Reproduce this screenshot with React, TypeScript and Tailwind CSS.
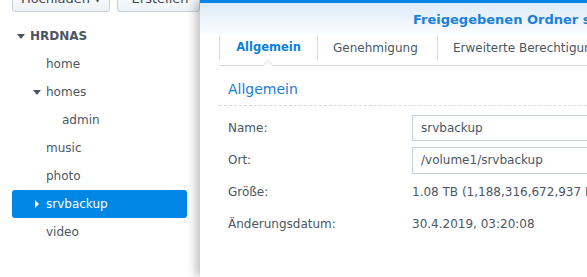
import React from "react";

const font = { fontFamily: '"DejaVu Sans", Verdana, sans-serif' };

function TriDown({ className }: { className?: string }) {
  return (
    <svg width="8" height="5" viewBox="0 0 8 5" className={className}>
      <path d="M0 0 L8 0 L4 5 Z" fill="currentColor" />
    </svg>
  );
}
function TriRight({ className }: { className?: string }) {
  return (
    <svg width="4" height="8" viewBox="0 0 4 8" className={className}>
      <path d="M0 0 L4 4 L0 8 Z" fill="currentColor" />
    </svg>
  );
}

function TreeRow({
  label,
  pl,
  box = 0,
  icon,
  selected,
  bold,
}: {
  label: string;
  pl: number;
  box?: number;
  icon?: "down" | "right";
  selected?: boolean;
  bold?: boolean;
}) {
  return (
    <div
      className={`h-[28px] flex items-center rounded-[3px] ${
        selected ? "bg-[#0086e5] text-white" : "text-[#4b5663]"
      } ${bold ? "font-bold" : ""}`}
      style={{ paddingLeft: pl }}
    >
      {box > 0 && (
        <div className="flex items-center shrink-0" style={{ width: box }}>
          {icon === "down" && <TriDown className="text-[#4b5663]" />}
          {icon === "right" && <TriRight className="text-white" />}
        </div>
      )}
      <span>{label}</span>
    </div>
  );
}

export default function App() {
  return (
    <div
      className="relative w-[587px] h-[277px] overflow-hidden bg-white text-[12px] text-[#4b5663]"
      style={font}
    >
      {/* Left panel */}
      <div className="w-[200px] h-full bg-white flex flex-col">
        <div className="flex gap-[7px] pl-[12px] mt-[-14px]">
          <div className="w-[107px] h-[26px] border border-[#c6ced8] rounded-[3px] bg-gradient-to-b from-[#ffffff] to-[#eef2f6] flex items-center justify-center text-[#3c4650] text-[13px]">
            Hochladen ▾
          </div>
          <div className="w-[90px] h-[26px] border border-[#c6ced8] rounded-[3px] bg-gradient-to-b from-[#ffffff] to-[#eef2f6] flex items-center pl-[14px] text-[#3c4650] text-[13px]">
            Erstellen
          </div>
        </div>
        <div className="mt-[10px] w-[175px] ml-[12px] flex flex-col">
          <TreeRow label="HRDNAS" pl={5} box={13} icon="down" bold />
          <TreeRow label="home" pl={34} />
          <TreeRow label="homes" pl={21} box={13} icon="down" />
          <TreeRow label="admin" pl={50} />
          <TreeRow label="music" pl={34} />
          <TreeRow label="photo" pl={34} />
          <TreeRow label="srvbackup" pl={23} box={11} icon="right" selected />
          <TreeRow label="video" pl={34} />
        </div>
      </div>

      {/* Dialog window */}
      <div className="absolute left-[200px] top-0 w-[600px] h-[277px] bg-white shadow-[-5px_0_8px_rgba(0,0,0,0.22)] flex flex-col">
        <div className="h-[3px] bg-[#0086e5]" />
        <div className="h-[33px] bg-gradient-to-b from-[#dcebf9] to-[#fdfeff] flex items-center pl-[213px] font-bold text-[13px] text-[#1a80dc] whitespace-nowrap">
          Freigegebenen Ordner synchronisieren
        </div>
        <div className="relative mx-[19px] h-[30px] border-b border-[#d6dbe0] flex items-start">
          <div className="flex items-center h-[24px]">
            <div className="w-px h-[24px] bg-[#d6dde4]" />
            <div className="w-[97px] text-center font-bold text-[11.5px] text-[#0a7fe0]">
              Allgemein
            </div>
            <div className="w-px h-[24px] bg-[#d6dde4]" />
            <div className="w-[119px] pl-[15px]">Genehmigung</div>
            <div className="w-px h-[24px] bg-[#d6dde4]" />
            <div className="pl-[15px] whitespace-nowrap">Erweiterte Berechtigungen</div>
          </div>
          <div className="absolute left-[43px] bottom-[-1px] w-0 h-0 border-l-[6px] border-r-[6px] border-b-[6px] border-l-transparent border-r-transparent border-b-[#d6dbe0]" />
          <div className="absolute left-[44px] bottom-[-1px] w-0 h-0 border-l-[5px] border-r-[5px] border-b-[5px] border-l-transparent border-r-transparent border-b-white" />
        </div>
        <div className="mx-[19px] mt-[13px] pb-[5px] pl-[9px] border-b border-dashed border-[#d6dbe0] text-[14px] text-[#1a80dc]">
          Allgemein
        </div>
        <div className="pl-[28px] mt-[6px] flex flex-col">
          <div className="h-[32px] flex items-center">
            <div className="w-[184px]">Name:</div>
            <div className="w-[300px] h-[26px] border border-[#c7d2de] flex items-center pl-[8px]">srvbackup</div>
          </div>
          <div className="h-[32px] flex items-center">
            <div className="w-[184px]">Ort:</div>
            <div className="w-[300px] h-[27px] border border-[#c7d2de] flex items-center pl-[8px]">/volume1/srvbackup</div>
          </div>
          <div className="h-[32px] flex items-center">
            <div className="w-[184px]">Größe:</div>
            <div className="whitespace-nowrap">1.08 TB (1,188,316,672,937 Bytes)</div>
          </div>
          <div className="h-[32px] flex items-center">
            <div className="w-[184px]">Änderungsdatum:</div>
            <div>30.4.2019, 03:20:08</div>
          </div>
        </div>
      </div>
    </div>
  );
}
